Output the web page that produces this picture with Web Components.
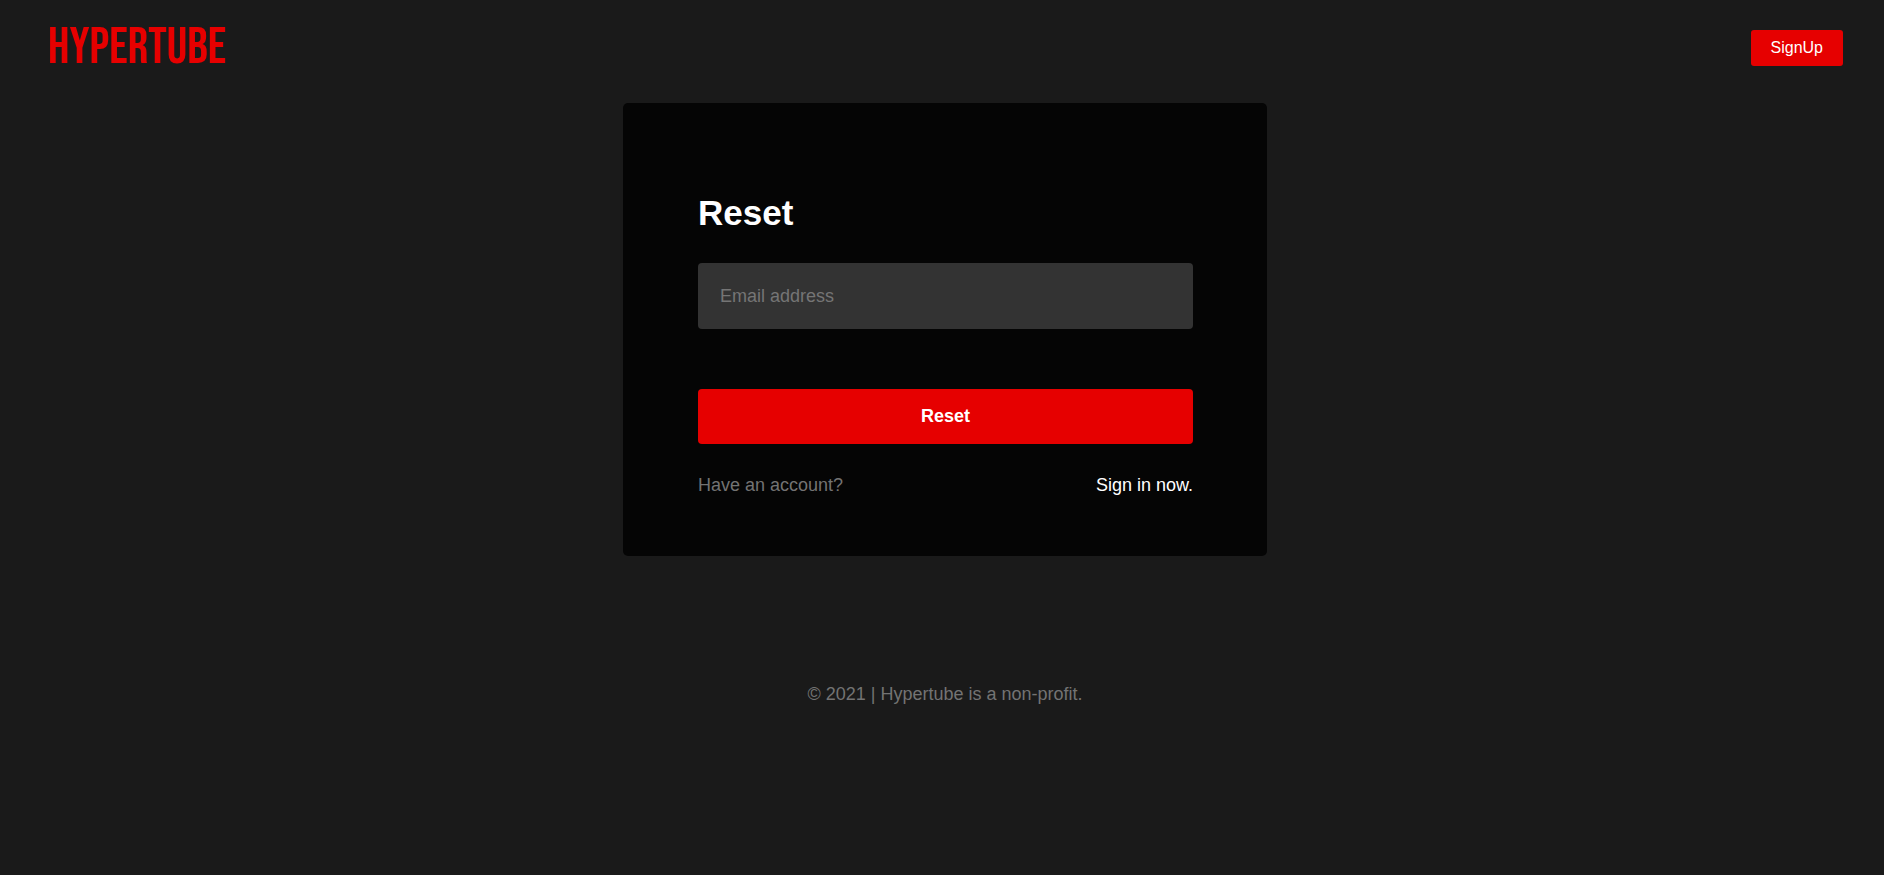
<!DOCTYPE html>
<html lang="en">
<head>
<meta charset="utf-8">
<title>Hypertube</title>
<style>
  body {
    margin: 0;
    background: #1a1a1a;
    font-family: "Liberation Sans", Arial, sans-serif;
    font-size: 18px;
    line-height: 26px;
    --brand: #e60000;
    --muted: #737373;
  }
</style>
</head>
<body>
<hyper-app></hyper-app>
<script>
  const define = (name, html) => {
    const template = document.createElement('template');
    template.innerHTML = html;
    customElements.define(name, class extends HTMLElement {
      constructor() {
        super();
        this.attachShadow({ mode: 'open' }).append(template.content.cloneNode(true));
      }
    });
  };

  define('hyper-logo', `
    <style>
      :host { display: block; }
      a {
        display: block;
        color: var(--brand);
        font: 51px/36px "Bebas Neue", "Liberation Sans", sans-serif;
        text-decoration: none;
      }
    </style>
    <a href="#"><slot></slot></a>`);

  define('hyper-header', `
    <style>
      header {
        display: flex;
        align-items: center;
        justify-content: space-between;
        padding: 30px 41px 37px 42px;
      }
      button {
        height: 36px;
        padding: 0 20px;
        border: 0;
        border-radius: 3px;
        background: var(--brand);
        color: #fff;
        font: 16px/24px "Liberation Sans", Arial, sans-serif;
        cursor: pointer;
      }
    </style>
    <header>
      <hyper-logo>HYPERTUBE</hyper-logo>
      <button type="button"><slot></slot></button>
    </header>`);

  define('hyper-reset-card', `
    <style>
      :host {
        display: block;
        box-sizing: border-box;
        width: 100%;
        max-width: 644px;
        margin: 0 auto;
        padding: 88px 74px 58px 75px;
        border-radius: 5px;
        background: #050505;
      }
      h1 { margin: 0 0 28px; color: #fff; font-size: 35px; line-height: 44px; }
      form { display: flex; flex-direction: column; }
      input, button {
        box-sizing: border-box;
        width: 100%;
        border: 0;
        border-radius: 4px;
        font-family: inherit;
        font-size: 18px;
      }
      input { height: 66px; margin: 0 0 60px; padding: 0 22px; background: #333; color: #fff; }
      input::placeholder { color: #757575; }
      button { height: 55px; background: var(--brand); color: #fff; font-weight: bold; cursor: pointer; }
      p { display: flex; justify-content: space-between; margin: 28px 0 0; color: var(--muted); }
      a { color: #fff; text-decoration: none; }
    </style>
    <h1><slot></slot></h1>
    <form>
      <input type="email" aria-label="Email address" placeholder="Email address">
      <button type="button">Reset</button>
    </form>
    <p><span>Have an account?</span><a href="#">Sign in now.</a></p>`);

  define('hyper-footer', `
    <style>
      :host { display: block; padding: 125px 0 40px; color: var(--muted); text-align: center; }
    </style>
    <footer><slot></slot></footer>`);

  define('hyper-app', `
    <style>
      :host { display: block; padding-left: 6px; }
    </style>
    <hyper-header>SignUp</hyper-header>
    <main><hyper-reset-card>Reset</hyper-reset-card></main>
    <hyper-footer>© 2021 | Hypertube is a non-profit.</hyper-footer>`);
</script>
</body>
</html>
